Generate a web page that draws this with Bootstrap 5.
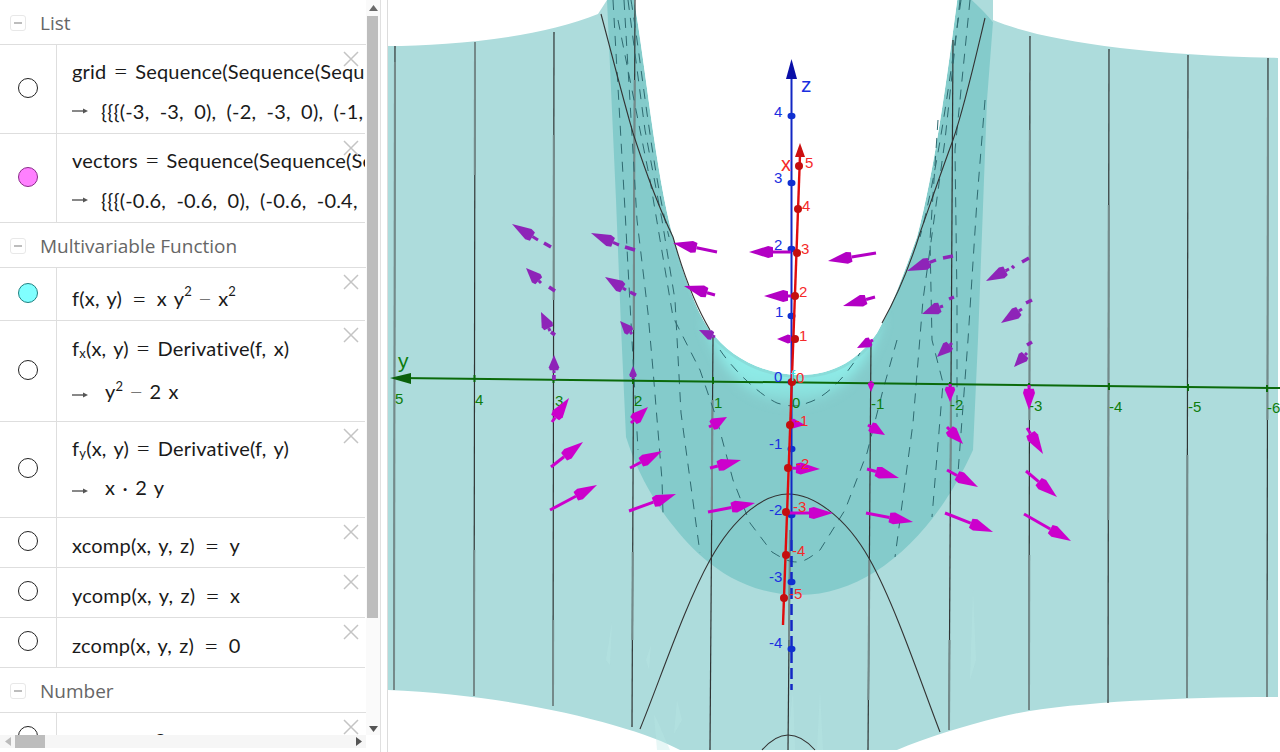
<!DOCTYPE html>
<html lang="en">
<head>
    <meta charset="UTF-8">
    <title>GeoGebra</title>
    <link href="https://cdn.jsdelivr.net/npm/bootstrap@5.3.0/dist/css/bootstrap.min.css" rel="stylesheet">
    <style>
        html, body { height: 752px; overflow: hidden; background: #fff; }
        .algebra { width: 381px; height: 752px; border-right: 1px solid #e0e0e0; }
        .splitter { width: 7px; height: 752px; border-right: 1px solid #dcdcdc; }
        .plot-area { width: 892px; height: 752px; }
        .plot-area svg { display: block; }
        .list-view { width: 366px; height: 735px; overflow: hidden; }

        .group-head { height: 45px; border-bottom: 1px solid #dedede; padding: 2px 0 0 10px; color: #666; font: 19px/42px "Open Sans", sans-serif; }
        .minus-box { width: 16px; height: 16px; margin-right: 14px; border: 1px solid #e8e8e8; border-radius: 3px; }
        .minus-box::after { content: ""; width: 8px; height: 2px; background: #bdbdbd; }

        .item-row { border-bottom: 1px solid #dedede; position: relative; width: 365px; }
        .h53 { height: 53px; } .h101 { height: 101px; } .h96 { height: 96px; } .h89 { height: 89px; } .h50 { height: 50px; }
        .marble-cell { width: 57px; flex: none; border-right: 1px solid #dedede; padding-bottom: 3px; }
        .marble { width: 20px; height: 20px; border-radius: 50%; border: 1px solid #222; background: #fff; }
        .marble-pink { background: #ff80ff; border-color: #8a2a8a; }
        .marble-cyan { background: #80ffff; border-color: #1f8080; }
        .formula-cell { padding-left: 15px; min-width: 0; flex: 1; overflow: hidden; white-space: nowrap; color: #1a1a1a; font: 20px "Lato", sans-serif; letter-spacing: .2px; word-spacing: 2px; }
        .formula-line { display: flex; align-items: center; white-space: pre; }
        .h89 .formula-cell { padding-top: 5px; } .h89 .formula-line { height: 41px; }
        .h101 .formula-cell { padding-top: 5px; } .h101 .formula-line { height: 43px; }
        .h96 .formula-cell { padding-top: 6px; } .h96 .formula-line { height: 39px; }
        .h53 .formula-cell { padding-top: 10px; } .h53 .formula-line { height: 40px; }
        .h50 .formula-cell { padding-top: 7px; } .h50 .formula-line { height: 40px; }
        .formula-line.list-value { word-spacing: 5px; margin-top: -1px; }
        .eq { margin: 0 7px; font-size: 25px; line-height: 1; font-weight: 300; }
        .eq-wide { margin: 0 10px; font-size: 25px; line-height: 1; font-weight: 300; }
        .fade-op { color: #777; margin: 0 6px; font-size: 24px; line-height: 1; font-weight: 300; }
        .arrow-out { width: 16px; height: 8px; margin: 1px 13px 0 0; flex: none; }
        .arrow-low { margin-top: 8px; }
        .formula-line sup { font-size: 13px; top: -.55em; }
        .formula-line sub { font-size: 13px; bottom: -.2em; }
        .close-x { position: absolute; top: 6px; left: 343px; width: 16px; height: 16px; }

        .vbar { width: 14px; height: 735px; background: #fafafa; }
        .vbar-thumb { width: 11px; height: 602px; margin: 1px 0 0 1px; background: #bdbdbd; }
        .vbar-btn { height: 15px; }
        .vbar-rest { height: 103px; }
        .hbar { width: 366px; height: 13px; background: #f6f6f6; }
        .hbar-thumb { width: 30px; height: 13px; background: #bdbdbd; }
        .hbar-btn { width: 15px; height: 13px; }
        .hbar-rest { width: 306px; }

        .lbl { font: 15px "Liberation Sans", sans-serif; }
        .lbl-y { fill: #0d7d0d; }
        .lbl-z { fill: #1a2fe0; }
        .lbl-x { fill: #f52a2a; }
    </style>
</head>
<body class="m-0">
<div class="d-flex">
    <div class="algebra">
        <div class="d-flex">
            <div class="list-view">
                <div class="group-head d-flex align-items-center"><span class="minus-box d-flex align-items-center justify-content-center"></span>List</div>

                <div class="item-row h89 d-flex">
                    <div class="marble-cell d-flex align-items-center justify-content-center"><span class="marble"></span></div>
                    <div class="formula-cell">
                        <div class="formula-line">grid<span class="eq">=</span>Sequence(Sequence(Sequence</div>
                        <div class="formula-line list-value"><svg class="arrow-out" viewBox="0 0 16 8"><path d="M0 4h12" stroke="#555" stroke-width="1.4"/><path d="M16 4l-5-2.5v5z" fill="#555"/></svg>{{{(-3, -3, 0), (-2, -3, 0), (-1,</div>
                    </div>
                    <svg class="close-x" viewBox="0 0 16 16"><path d="M1 1l14 14M15 1L1 15" stroke="#c4c4c4" stroke-width="1.5"/></svg>
                </div>

                <div class="item-row h89 d-flex">
                    <div class="marble-cell d-flex align-items-center justify-content-center"><span class="marble marble-pink"></span></div>
                    <div class="formula-cell">
                        <div class="formula-line">vectors<span class="eq">=</span>Sequence(Sequence(Sequence</div>
                        <div class="formula-line list-value"><svg class="arrow-out" viewBox="0 0 16 8"><path d="M0 4h12" stroke="#555" stroke-width="1.4"/><path d="M16 4l-5-2.5v5z" fill="#555"/></svg>{{{(-0.6, -0.6, 0), (-0.6, -0.4,</div>
                    </div>
                    <svg class="close-x" viewBox="0 0 16 16"><path d="M1 1l14 14M15 1L1 15" stroke="#c4c4c4" stroke-width="1.5"/></svg>
                </div>

                <div class="group-head d-flex align-items-center"><span class="minus-box d-flex align-items-center justify-content-center"></span>Multivariable Function</div>

                <div class="item-row h53 d-flex">
                    <div class="marble-cell d-flex align-items-center justify-content-center"><span class="marble marble-cyan"></span></div>
                    <div class="formula-cell">
                        <div class="formula-line">f(x, y)<span class="eq-wide">=</span>x y<sup>2</sup><span class="fade-op">−</span>x<sup>2</sup></div>
                    </div>
                    <svg class="close-x" viewBox="0 0 16 16"><path d="M1 1l14 14M15 1L1 15" stroke="#c4c4c4" stroke-width="1.5"/></svg>
                </div>

                <div class="item-row h101 d-flex">
                    <div class="marble-cell d-flex align-items-center justify-content-center"><span class="marble"></span></div>
                    <div class="formula-cell">
                        <div class="formula-line"><span>f<sub>x</sub>(x, y)</span><span class="eq">=</span>Derivative(f, x)</div>
                        <div class="formula-line"><svg class="arrow-out arrow-low" viewBox="0 0 16 8"><path d="M0 4h12" stroke="#555" stroke-width="1.4"/><path d="M16 4l-5-2.5v5z" fill="#555"/></svg><span class="ms-1">y<sup>2</sup></span><span class="fade-op">−</span>2 x</div>
                    </div>
                    <svg class="close-x" viewBox="0 0 16 16"><path d="M1 1l14 14M15 1L1 15" stroke="#c4c4c4" stroke-width="1.5"/></svg>
                </div>

                <div class="item-row h96 d-flex">
                    <div class="marble-cell d-flex align-items-center justify-content-center"><span class="marble"></span></div>
                    <div class="formula-cell">
                        <div class="formula-line"><span>f<sub>y</sub>(x, y)</span><span class="eq">=</span>Derivative(f, y)</div>
                        <div class="formula-line"><svg class="arrow-out arrow-low" viewBox="0 0 16 8"><path d="M0 4h12" stroke="#555" stroke-width="1.4"/><path d="M16 4l-5-2.5v5z" fill="#555"/></svg><span class="ms-1">x · 2 y</span></div>
                    </div>
                    <svg class="close-x" viewBox="0 0 16 16"><path d="M1 1l14 14M15 1L1 15" stroke="#c4c4c4" stroke-width="1.5"/></svg>
                </div>

                <div class="item-row h50 d-flex">
                    <div class="marble-cell d-flex align-items-center justify-content-center"><span class="marble"></span></div>
                    <div class="formula-cell"><div class="formula-line">xcomp(x, y, z)<span class="eq-wide">=</span>y</div></div>
                    <svg class="close-x" viewBox="0 0 16 16"><path d="M1 1l14 14M15 1L1 15" stroke="#c4c4c4" stroke-width="1.5"/></svg>
                </div>
                <div class="item-row h50 d-flex">
                    <div class="marble-cell d-flex align-items-center justify-content-center"><span class="marble"></span></div>
                    <div class="formula-cell"><div class="formula-line">ycomp(x, y, z)<span class="eq-wide">=</span>x</div></div>
                    <svg class="close-x" viewBox="0 0 16 16"><path d="M1 1l14 14M15 1L1 15" stroke="#c4c4c4" stroke-width="1.5"/></svg>
                </div>
                <div class="item-row h50 d-flex">
                    <div class="marble-cell d-flex align-items-center justify-content-center"><span class="marble"></span></div>
                    <div class="formula-cell"><div class="formula-line">zcomp(x, y, z)<span class="eq-wide">=</span>0</div></div>
                    <svg class="close-x" viewBox="0 0 16 16"><path d="M1 1l14 14M15 1L1 15" stroke="#c4c4c4" stroke-width="1.5"/></svg>
                </div>

                <div class="group-head d-flex align-items-center"><span class="minus-box d-flex align-items-center justify-content-center"></span>Number</div>

                <div class="item-row h50 d-flex">
                    <div class="marble-cell d-flex align-items-center justify-content-center"><span class="marble"></span></div>
                    <div class="formula-cell"><div class="formula-line">rotate<span class="eq">=</span>2</div></div>
                    <svg class="close-x" viewBox="0 0 16 16"><path d="M1 1l14 14M15 1L1 15" stroke="#c4c4c4" stroke-width="1.5"/></svg>
                </div>
            </div>

            <div class="vbar">
                <div class="vbar-btn d-flex align-items-center justify-content-center"><svg width="9" height="6" viewBox="0 0 9 6"><path d="M4.5 0L9 6H0z" fill="#6a6a6a"/></svg></div>
                <div class="vbar-thumb"></div>
                <div class="vbar-rest"></div>
                <div class="vbar-btn d-flex align-items-center justify-content-center"><svg width="9" height="6" viewBox="0 0 9 6"><path d="M4.5 6L9 0H0z" fill="#555"/></svg></div>
            </div>
        </div>

        <div class="hbar d-flex">
            <div class="hbar-btn d-flex align-items-center justify-content-center"><svg width="6" height="9" viewBox="0 0 6 9"><path d="M0 4.5L6 0v9z" fill="#bbb"/></svg></div>
            <div class="hbar-thumb"></div>
            <div class="hbar-rest"></div>
            <div class="hbar-btn d-flex align-items-center justify-content-center"><svg width="6" height="9" viewBox="0 0 6 9"><path d="M6 4.5L0 0v9z" fill="#555"/></svg></div>
        </div>
    </div>

    <div class="splitter"></div>

    <div class="plot-area">
        <svg id="plot" width="892" height="752" viewBox="388 0 892 752" xmlns="http://www.w3.org/2000/svg">
            <defs>
                <linearGradient id="valley" gradientUnits="userSpaceOnUse" x1="0" y1="372" x2="0" y2="414">
                    <stop offset="0" stop-color="#8eebe7"/>
                    <stop offset=".55" stop-color="#8adfdc"/>
                    <stop offset="1" stop-color="#84cbcb"/>
                </linearGradient>
                <filter id="soft" x="-20%" y="-20%" width="140%" height="140%"><feGaussianBlur stdDeviation="6"/></filter>
            </defs>

            <!-- surface -->
            <path fill="#addcdc" d="M388 46C450 46 540 38 598 14L607 0H993V20C1040 40 1140 55 1278 58V697C1180 697 1060 702 1000 717C960 727 925 738 897 750H680C640 728 520 695 388 690Z"/>
            <path fill="#b9e9e6" d="M612 622L610 665 606 660ZM677 700L682 720 674 734ZM651 645L649 670 646 660ZM654 715L657 750 670 750 657 720ZM820 690L823 750 817 750ZM973 590L976 660 970 680ZM793 690L795 750H787Z" opacity=".35"/>
            <path fill="#84cbcb" d="M607 0L616 200 621 327 626 437C634 462 645 487 667 518C690 548 730 595 800 595C870 595 935 535 973 450L978 340 987 100 993 22C985 12 978 6 972 0Z"/>
            <path fill="url(#valley)" filter="url(#soft)" d="M705 318C730 430 855 430 882 318Z"/>
            <path fill="#fff" stroke="#85cfce" stroke-width="6" paint-order="stroke" stroke-opacity=".5" d="M633 -6C645 60 655 170 673 237C685 280 698 315 710 330C730 358 765 375 800 375C835 375 860 358 877 333C893 305 905 270 917 237C935 170 948 70 958 -6Z"/>
            <path fill="#fff" d="M633 -6C645 60 655 170 673 237C685 280 698 315 710 330C730 358 765 375 800 375C835 375 860 358 877 333C893 305 905 270 917 237C935 170 948 70 958 -6Z"/>
            <path fill="#addcdc" d="M972 0H993V22C985 12 978 6 972 0Z"/>

            <g id="grid" fill="none"></g>

            <!-- dashed level curves -->
            <g fill="none" stroke="#2f6a70" stroke-width="1" stroke-dasharray="10 8">
                <path d="M613 0L625 210 628 267 638 450"/>
                <path d="M624 0L637 220 648 313 653 370 662 480 663 513"/>
                <path d="M628 0L645 130 662 220 675 300 681 413 700 553"/>
                <path d="M618 20L650 180 673 317 700 370 717 420 733 480 750 523 772 552C785 560 790 562 797 562C805 562 812 556 820 550L845 510 867 453 883 390 897 340"/>
                <path d="M720 350C735 372 760 395 777 403C790 407 800 407 807 403C825 398 845 378 860 353"/>
                <path d="M631 0C641 60 652 170 669 237"/>
                <path d="M961 0C951 70 938 170 920 237"/>
                <path d="M960 0L945 140 923 300 913 423 895 557"/>
                <path d="M970 0L955 150 957 300 957 417"/>
                <path d="M985 100L977 200 968 340 958 473"/>
                <path d="M938 120L930 240 932 340 943 383 932 517"/>
            </g>

            <!-- black curves -->
            <g fill="none" stroke="#333" stroke-width="1.1">
                <path d="M601 14C612 55 622 95 633 133C645 170 660 210 673 237C685 280 698 310 710 330"/>
                <path d="M985 18C975 60 965 105 953 140C940 175 930 205 920 233C910 265 895 300 882 323"/>
                <path d="M640 729C660 680 685 605 710 560C735 515 765 494 788 494C812 494 845 515 870 560C895 605 920 680 940 732"/>
                <path d="M762 750C770 741 780 735 788 735C797 735 807 741 815 750"/>
            </g>

            <!-- y axis -->
            <path d="M400 378L1280 388" stroke="#0b6a0b" stroke-width="2"/>
            <path d="M390 378L411 373V384Z" fill="#0a610a"/>
            <g stroke="#0b6a0b" stroke-width="2">
                <path d="M474.500 375v7M553.500 376v7M633 377v7M713 377v7M871 381v7M950 382v7M1029 383v7M1109 383v7M1188 384v7M1267 385v7"/>
            </g>
            <g class="lbl lbl-y">
                <text x="395" y="404">5</text><text x="475" y="405">4</text><text x="555" y="406">3</text><text x="634" y="406">2</text>
                <text x="714" y="408">1</text><text x="792" y="408">0</text><text x="871" y="409">-1</text><text x="950" y="410">-2</text>
                <text x="1029" y="411">-3</text><text x="1109" y="412">-4</text><text x="1188" y="412">-5</text><text x="1267" y="413">-6</text>
            </g>
            <text x="398" y="368" font-size="21" class="lbl-y" font-family="Liberation Sans">y</text>

            <!-- z axis -->
            <path d="M791.500 78V540" stroke="#1327c4" stroke-width="2"/>
            <path d="M791.500 540V690" stroke="#1327c4" stroke-width="2.500" stroke-dasharray="11 5"/>
            <path d="M791.500 59L797 79H786Z" fill="#0a0fa8"/>
            <g id="zTicks" fill="#1030d0"></g>
            <text x="801" y="92" font-size="21" class="lbl-z" font-family="Liberation Sans">z</text>
            <g class="lbl lbl-z">
                <text x="774" y="117">4</text><text x="774" y="183">3</text><text x="774" y="250">2</text><text x="775" y="317">1</text><text x="774" y="382">0</text>
                <text x="769" y="449">-1</text><text x="769" y="515">-2</text><text x="769" y="582">-3</text><text x="769" y="648">-4</text>
            </g>

            <g id="arrows"></g>

            <!-- x axis -->
            <path d="M800 155L783 625" stroke="#e00d0d" stroke-width="2.400"/>
            <path d="M800 143L805 157H795Z" fill="#cc1010"/>
            <g id="xTicks" fill="#c40e0e"></g>
            <text x="781" y="171" font-size="20" class="lbl-x" font-family="Liberation Sans">x</text>
            <g class="lbl lbl-x">
                <text x="805" y="168">5</text><text x="802" y="211">4</text><text x="801" y="254">3</text><text x="799" y="297">2</text><text x="799" y="341">1</text>
                <text x="796" y="383">0</text><text x="795" y="426">-1</text><text x="796" y="469">-2</text><text x="793" y="512">-3</text><text x="792" y="556">-4</text><text x="789" y="599">-5</text>
            </g>
            <text x="791" y="381" font-size="15" fill="#35e6e6" font-family="Liberation Sans">f</text>
        </svg>
    </div>
</div>

<script src="https://cdn.jsdelivr.net/npm/bootstrap@5.3.0/dist/js/bootstrap.bundle.min.js"></script>
<script>
    const NS = 'http://www.w3.org/2000/svg';
    function add(parent, tag, attrs) {
        const el = document.createElementNS(NS, tag);
        for (const k in attrs) el.setAttribute(k, attrs[k]);
        parent.appendChild(el);
        return el;
    }

    // grid lines: x top, x bottom, y top, y bottom, gray stretches
    const gridLines = [
        [395, 394, 46, 690, [[62, 690]]],
        [475, 474, 42, 696, [[42, 175], [550, 696]]],
        [554, 553, 32, 706, [[135, 300], [620, 706]]],
        [635, 632, 0, 727, [[80, 330], [552, 640]]],
        [713, 710, 337, 750, [[400, 520]]],
        [790, 788, 530, 750, [[530, 640]]],
        [871, 868, 340, 750, [[560, 700]]],
        [953, 949, 40, 730, [[390, 470], [640, 730]]],
        [1030, 1029, 36, 710, [[130, 420], [555, 710]]],
        [1109, 1108, 49, 703, [[205, 520]]],
        [1188, 1187, 55, 698, [[455, 698]]],
        [1268, 1267, 58, 697, [[90, 420], [600, 697]]]
    ];
    const grid = document.getElementById('grid');
    gridLines.forEach(([x1, x2, y1, y2, grays]) => {
        add(grid, 'line', { x1, y1, x2, y2, stroke: '#2f3434', 'stroke-width': 1.2 });
        const at = y => x1 + (x2 - x1) * (y - y1) / (y2 - y1);
        grays.forEach(([a, b]) => add(grid, 'line', { x1: at(a), y1: a, x2: at(b), y2: b, stroke: '#748a8a', 'stroke-width': 2 }));
    });

    [116, 183, 249, 316, 382, 449, 515, 582, 649].forEach(cy => add(document.getElementById('zTicks'), 'ellipse', { cx: 791.500, cy, rx: 4, ry: 3.200 }));
    [[799, 166], [798, 209], [797, 253], [795, 296], [795, 339], [792, 382], [790, 425], [788, 468], [786, 512], [786, 555], [784, 598]]
        .forEach(([cx, cy]) => add(document.getElementById('xTicks'), 'circle', { cx, cy, r: 4 }));

    // vector field: tail x, tail y, tip x, tip y
    const MAGENTA = '#cc00cc', VIOLET = '#8e24b8', MID = '#b300c4';
    const arrows = document.getElementById('arrows');
    function arrow(x1, y1, x2, y2, color) {
        const dx = x2 - x1, dy = y2 - y1, len = Math.hypot(dx, dy);
        const ux = dx / len, uy = dy / len;
        const head = Math.min(24, len * 0.85), half = Math.min(6, head * 0.34);
        const bx = x2 - ux * head, by = y2 - uy * head;
        const wx = x2 - ux * head * 0.8, wy = y2 - uy * head * 0.8;
        add(arrows, 'line', { x1, y1, x2: bx, y2: by, stroke: color, 'stroke-width': 3 });
        const pts = [[x2, y2], [wx - uy * half, wy + ux * half], [bx - uy * half * 0.8, by + ux * half * 0.8],
                     [bx + uy * half * 0.8, by - ux * half * 0.8], [wx + uy * half, wy - ux * half]];
        add(arrows, 'polygon', { points: pts.map(p => p.join(',')).join(' '), fill: color });
    }
    function frag(x1, y1, x2, y2) {
        add(arrows, 'line', { x1, y1, x2, y2, stroke: VIOLET, 'stroke-width': 3.500 });
    }

    // left violet group, behind the surface
    [[538, 240, 512, 224], [541, 283, 526, 268], [550, 331, 541, 312], [554, 373, 554, 355],
     [619, 245, 591, 233], [626, 290, 605, 277], [632, 334, 620, 321], [633, 379, 633, 366],
     [715, 337, 699, 330], [936, 260, 907, 271], [1009, 269, 986, 281], [943, 306, 922, 314],
     [1022, 309, 1001, 323], [952, 343, 937, 357], [1027, 353, 1014, 367]]
        .forEach(a => arrow(a[0], a[1], a[2], a[3], VIOLET));
    [[544, 243, 551, 247], [549, 287, 555, 291], [551, 332, 555, 335], [554, 375, 554, 380], [625, 247, 635, 250],
     [630, 292, 636, 295], [943, 258, 953, 256], [1012, 268, 1014, 266], [1022, 262, 1029, 258], [949, 299, 954, 297], [1026, 303, 1032, 300], [1027, 345, 1032, 342]]
        .forEach(a => frag(a[0], a[1], a[2], a[3]));

    // centre group
    [[717, 252, 673, 243], [715, 295, 684, 286], [791, 252, 749, 252], [795, 296, 764, 296], [793, 339, 777, 339],
     [876, 253, 828, 261], [875, 297, 843, 306], [873, 340, 857, 348]]
        .forEach(a => arrow(a[0], a[1], a[2], a[3], MID));

    // lower magenta group
    [[871, 381, 871, 392], [950, 384, 950, 402], [1029, 385, 1029, 410],
     [552, 422, 569, 398], [551, 467, 583, 442], [550, 510, 597, 485],
     [631, 423, 648, 407], [630, 468, 662, 451], [629, 511, 676, 494],
     [709, 427, 727, 417], [710, 468, 741, 460], [708, 512, 755, 503],
     [788, 423, 805, 425], [788, 468, 820, 469], [788, 513, 833, 513],
     [868, 425, 885, 435], [867, 469, 899, 478], [866, 513, 913, 522],
     [947, 427, 963, 444], [947, 470, 978, 487], [945, 513, 993, 532],
     [1027, 428, 1043, 454], [1026, 471, 1057, 497], [1024, 514, 1071, 541]]
        .forEach(a => arrow(a[0], a[1], a[2], a[3], MAGENTA));
</script>
</body>
</html>
